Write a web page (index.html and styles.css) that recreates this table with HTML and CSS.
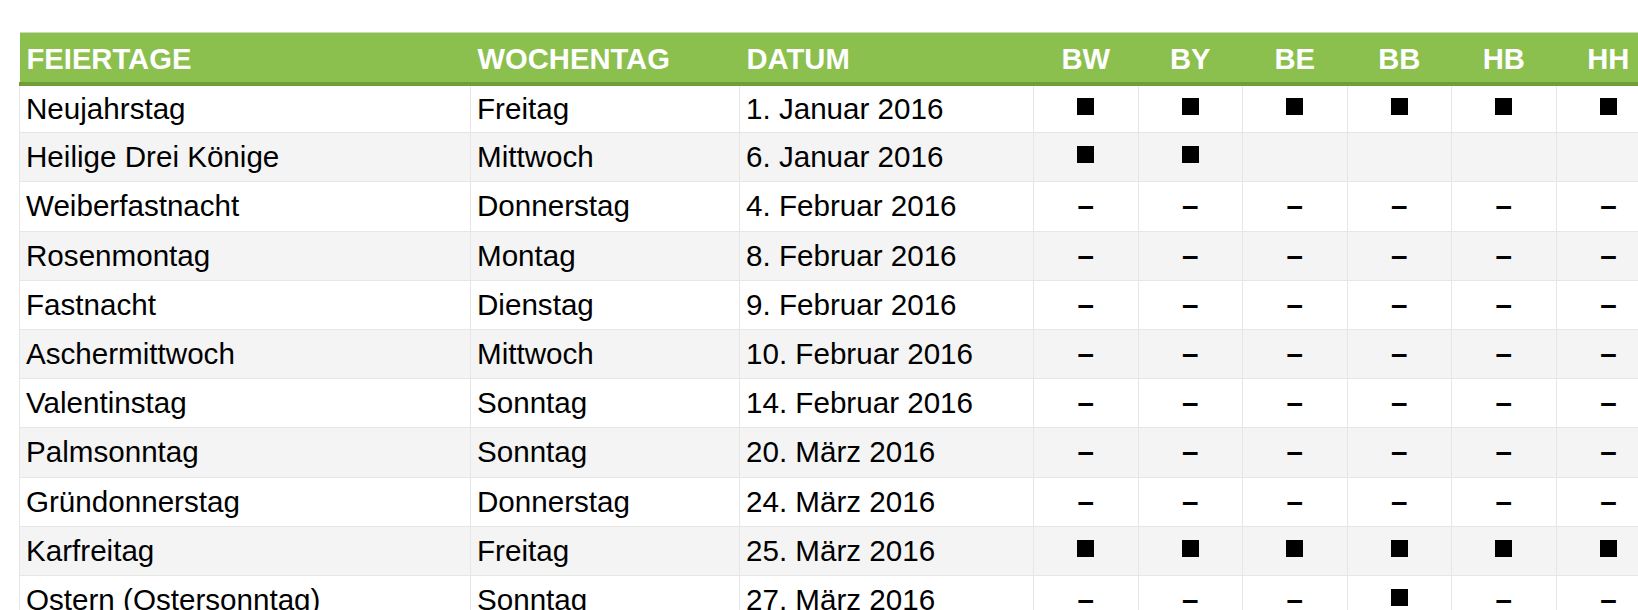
FILE: index.html
```html
<!DOCTYPE html>
<html lang="de">
<head>
<meta charset="utf-8">
<title>Feiertage 2016</title>
<link rel="stylesheet" href="styles.css">
</head>
<body>
<div class="page">
  <table class="holidays">
    <colgroup>
      <col class="c-name"><col class="c-day"><col class="c-date">
      <col class="c-state"><col class="c-state"><col class="c-state">
      <col class="c-state"><col class="c-state"><col class="c-state">
    </colgroup>
    <thead>
      <tr>
        <th>FEIERTAGE</th><th>WOCHENTAG</th><th>DATUM</th>
        <th class="st">BW</th><th class="st">BY</th><th class="st">BE</th>
        <th class="st">BB</th><th class="st">HB</th><th class="st">HH</th>
      </tr>
    </thead>
    <tbody>
      <tr><td>Neujahrstag</td><td>Freitag</td><td>1. Januar 2016</td>
        <td class="st"><span class="yes"></span></td><td class="st"><span class="yes"></span></td><td class="st"><span class="yes"></span></td>
        <td class="st"><span class="yes"></span></td><td class="st"><span class="yes"></span></td><td class="st"><span class="yes"></span></td></tr>
      <tr><td>Heilige Drei Könige</td><td>Mittwoch</td><td>6. Januar 2016</td>
        <td class="st"><span class="yes"></span></td><td class="st"><span class="yes"></span></td><td class="st"></td>
        <td class="st"></td><td class="st"></td><td class="st"></td></tr>
      <tr><td>Weiberfastnacht</td><td>Donnerstag</td><td>4. Februar 2016</td>
        <td class="st no">–</td><td class="st no">–</td><td class="st no">–</td><td class="st no">–</td><td class="st no">–</td><td class="st no">–</td></tr>
      <tr><td>Rosenmontag</td><td>Montag</td><td>8. Februar 2016</td>
        <td class="st no">–</td><td class="st no">–</td><td class="st no">–</td><td class="st no">–</td><td class="st no">–</td><td class="st no">–</td></tr>
      <tr><td>Fastnacht</td><td>Dienstag</td><td>9. Februar 2016</td>
        <td class="st no">–</td><td class="st no">–</td><td class="st no">–</td><td class="st no">–</td><td class="st no">–</td><td class="st no">–</td></tr>
      <tr><td>Aschermittwoch</td><td>Mittwoch</td><td>10. Februar 2016</td>
        <td class="st no">–</td><td class="st no">–</td><td class="st no">–</td><td class="st no">–</td><td class="st no">–</td><td class="st no">–</td></tr>
      <tr><td>Valentinstag</td><td>Sonntag</td><td>14. Februar 2016</td>
        <td class="st no">–</td><td class="st no">–</td><td class="st no">–</td><td class="st no">–</td><td class="st no">–</td><td class="st no">–</td></tr>
      <tr><td>Palmsonntag</td><td>Sonntag</td><td>20. März 2016</td>
        <td class="st no">–</td><td class="st no">–</td><td class="st no">–</td><td class="st no">–</td><td class="st no">–</td><td class="st no">–</td></tr>
      <tr><td>Gründonnerstag</td><td>Donnerstag</td><td>24. März 2016</td>
        <td class="st no">–</td><td class="st no">–</td><td class="st no">–</td><td class="st no">–</td><td class="st no">–</td><td class="st no">–</td></tr>
      <tr><td>Karfreitag</td><td>Freitag</td><td>25. März 2016</td>
        <td class="st"><span class="yes"></span></td><td class="st"><span class="yes"></span></td><td class="st"><span class="yes"></span></td>
        <td class="st"><span class="yes"></span></td><td class="st"><span class="yes"></span></td><td class="st"><span class="yes"></span></td></tr>
      <tr><td>Ostern (Ostersonntag)</td><td>Sonntag</td><td>27. März 2016</td>
        <td class="st no">–</td><td class="st no">–</td><td class="st no">–</td>
        <td class="st"><span class="yes"></span></td><td class="st no">–</td><td class="st no">–</td></tr>
    </tbody>
  </table>
</div>
</body>
</html>
```

FILE: styles.css
```css
html, body {
  margin: 0;
  padding: 0;
  background: #ffffff;
}

.page {
  width: 100vw;
  height: 100vh;
  overflow: hidden;
  padding: 32px 0 0 19px;
  box-sizing: border-box;
  font-family: "Liberation Sans", Arial, Helvetica, sans-serif;
}

.holidays {
  border-collapse: collapse;
  table-layout: fixed;
  width: 1641px;
  color: #000;
}

.c-name { width: 451px; }
.c-day { width: 269px; }
.c-date { width: 294px; }
.c-state { width: 104.5px; }

.holidays thead tr {
  background: #8bc04e;
  border-top: 1px solid #c9dcb4;
  border-bottom: 4px solid #6f9d3a;
}

.holidays th {
  height: 51px;
  padding: 5px 6px 0 7px;
  box-sizing: border-box;
  text-align: left;
  vertical-align: middle;
  color: #ffffff;
  font-weight: bold;
  font-size: 29.2px;
  white-space: nowrap;
}

.holidays th.st {
  text-align: center;
  padding-left: 0;
  padding-right: 0;
}

.holidays td {
  height: 49.2px;
  padding: 0 6px 0 6px;
  box-sizing: border-box;
  border-left: 1px solid #e6e6e6;
  border-bottom: 1px solid #e6e6e6;
  font-size: 29.6px;
  vertical-align: middle;
  white-space: nowrap;
}

.holidays td.st {
  text-align: center;
  padding-left: 0;
  padding-right: 0;
}

.holidays td.no {
  font-weight: bold;
}

.holidays tbody tr:nth-child(even) {
  background: #f4f4f4;
}

.yes {
  display: inline-block;
  width: 17px;
  height: 17px;
  background: #000;
  vertical-align: 4px;
}
```
